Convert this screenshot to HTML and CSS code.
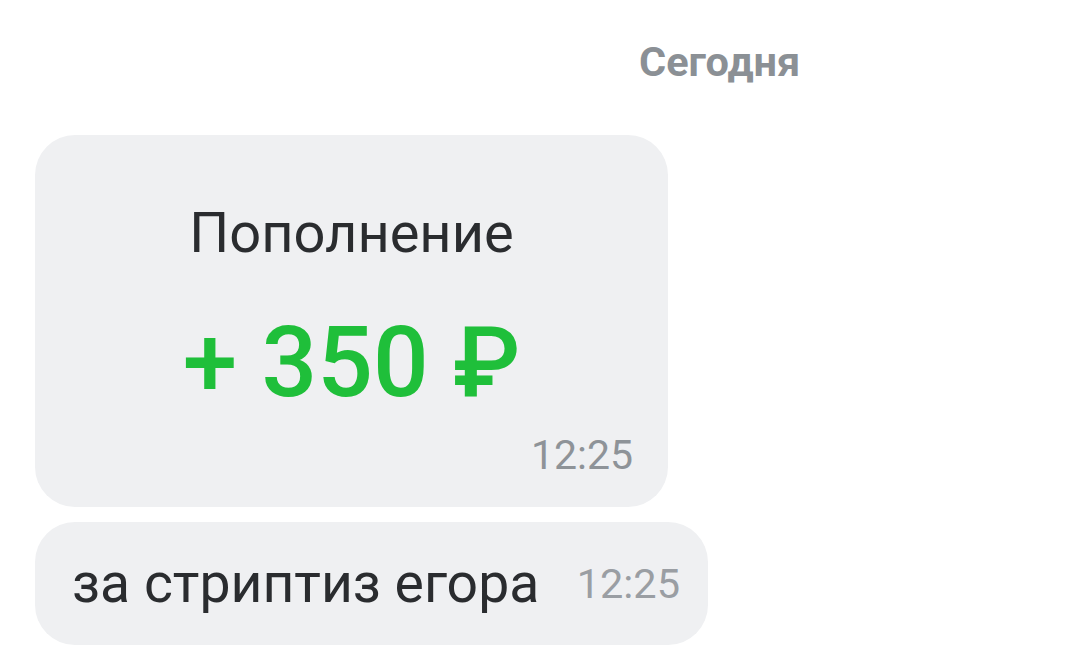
FILE: index.html
```html
<!DOCTYPE html>
<html lang="ru">
<head>
<meta charset="utf-8">
<link rel="stylesheet" href="styles.css">
</head>
<body>
<div class="chat">
  <div class="date-row"><span class="date">Сегодня</span></div>
  <div class="bubble card">
    <div class="card-title">Пополнение</div>
    <div class="card-amount">+ 350 ₽</div>
    <div class="card-time">12:25</div>
  </div>
  <div class="bubble note">
    <span class="note-text">за стриптиз егора</span>
    <span class="note-time">12:25</span>
  </div>
</div>
</body>
</html>
```
FILE: styles.css
```css
html, body {
  margin: 0;
  padding: 0;
  background: #ffffff;
}
body {
  font-family: Roboto, "Noto Sans", sans-serif;
  width: 1075px;
  height: 664px;
  overflow: hidden;
}
.chat {
  display: flex;
  flex-direction: column;
  align-items: flex-start;
  padding: 34px 0 0 35px;
}
.date-row {
  padding-left: 604px;
  height: 101px;
}
.date {
  font-weight: 700;
  font-size: 41.5px;
  line-height: 56px;
  color: #8b9095;
}
.bubble {
  background: #eff0f2;
  border-radius: 40px;
}
.card {
  width: 633px;
  height: 372px;
  box-sizing: border-box;
  display: flex;
  flex-direction: column;
  align-items: center;
  padding-top: 65px;
}
.card-title {
  font-size: 56px;
  line-height: 66px;
  color: #2a2c2f;
}
.card-amount {
  margin-top: 42px;
  font-size: 98px;
  line-height: 110px;
  font-weight: 500;
  color: #1fbf3a;
}
.card-time {
  align-self: flex-end;
  margin-right: 35px;
  margin-top: 12px;
  font-size: 41px;
  line-height: 50px;
  color: #8e9398;
}
.note {
  margin-top: 15px;
  width: 673px;
  height: 123px;
  box-sizing: border-box;
  display: flex;
  align-items: center;
  padding: 0 28px 0 37px;
  justify-content: space-between;
}
.note-text {
  font-size: 55.3px;
  color: #2a2c2f;
}
.note-time {
  font-size: 41.5px;
  color: #9a9ea3;
}
```
